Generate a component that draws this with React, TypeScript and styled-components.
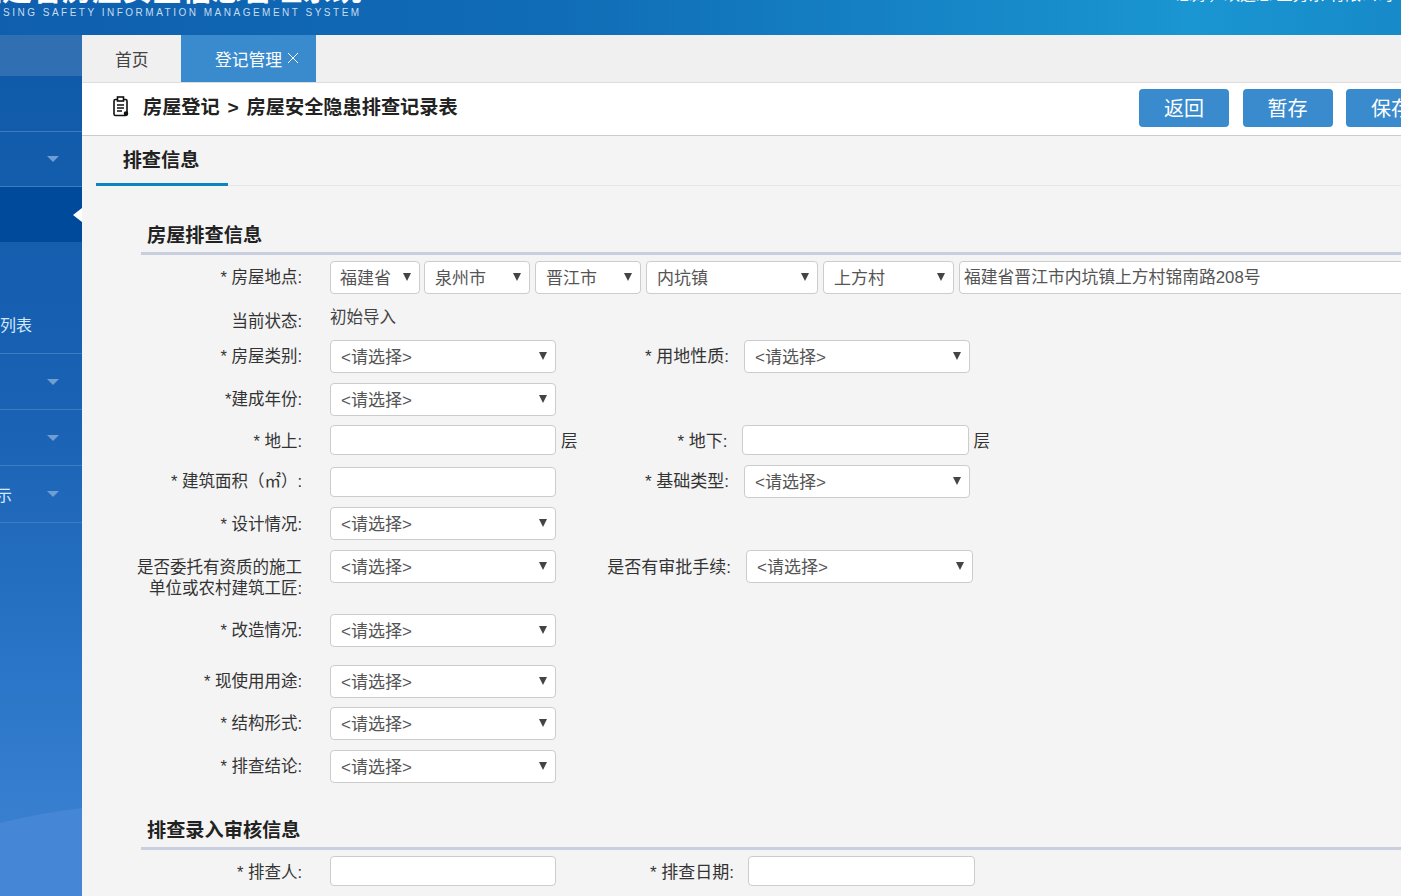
import React from 'react';
import styled, { createGlobalStyle } from 'styled-components';

const GlobalStyle = createGlobalStyle`
	html, body {
		margin: 0;
		padding: 0;
		height: 100%;
		overflow: hidden;
		background: #f4f4f4;
	}
	body {
		font-family: "Liberation Sans", "Noto Sans CJK SC", sans-serif;
		font-size: 16px;
		color: #333;
	}
`;

const Root = styled.div`
	width: 1401px;
	height: 896px;
	overflow: hidden;
	display: flex;
	flex-direction: column;
`;

const Header = styled.header`
	flex: none;
	height: 35px;
	overflow: hidden;
	display: flex;
	justify-content: space-between;
	background: linear-gradient(90deg, #0f5fae 0%, #106cb6 40%, #1a96d2 85%, #178ac9 100%);
`;

const Brand = styled.div`
	display: flex;
	flex-direction: column;
	margin-left: -28px;
	margin-top: -24px;
`;

const BrandTitle = styled.div`
	font-size: 30px;
	line-height: 28px;
	font-weight: 700;
	color: #fff;
	white-space: nowrap;
`;

const BrandSub = styled.div`
	margin-top: 3px;
	font-size: 10px;
	line-height: 12px;
	letter-spacing: 2.5px;
	color: #c6dcf0;
	white-space: nowrap;
	padding-left: 31px;
`;

const Welcome = styled.div`
	margin-top: -14px;
	margin-right: 8px;
	font-size: 16px;
	line-height: 18px;
	color: #fff;
	white-space: nowrap;
`;

const Body = styled.div`
	flex: 1;
	display: flex;
	min-height: 0;
`;

const Sidebar = styled.nav`
	flex: none;
	width: 82px;
	position: relative;
	overflow: hidden;
	display: flex;
	flex-direction: column;
	background: linear-gradient(180deg, #0f5aa8 0%, #1a62b4 45%, #2b76c8 75%, #3f84d4 100%);
`;

const SideTop = styled.div`
	height: 41px;
	background: #2f6fb2;
`;

const SideItem = styled.div<{ $height: number; $active?: boolean }>`
	height: ${p => p.$height}px;
	box-sizing: border-box;
	position: relative;
	display: flex;
	align-items: center;
	justify-content: flex-end;
	padding-right: 23px;
	border-bottom: ${p => (p.$active ? 'none' : '1px solid #3a7dc0')};
	background: ${p => (p.$active ? '#004a9b' : 'transparent')};
`;

const SideText = styled.span<{ $left: number; $top: number }>`
	position: absolute;
	left: ${p => p.$left}px;
	top: ${p => p.$top}px;
	font-size: 16px;
	color: #d3e8fa;
	white-space: nowrap;
`;

const Caret = styled.i`
	width: 0;
	height: 0;
	border-left: 6px solid transparent;
	border-right: 6px solid transparent;
	border-top: 6px solid #6f9ed2;
`;

const ActiveNotch = styled.i`
	position: absolute;
	right: 0;
	top: 50%;
	margin-top: -7px;
	width: 0;
	height: 0;
	border-top: 7px solid transparent;
	border-bottom: 7px solid transparent;
	border-right: 9px solid #fff;
`;

const Wave = styled.svg`
	position: absolute;
	left: 0;
	bottom: 0;
`;

const Main = styled.main`
	flex: 1;
	min-width: 0;
	overflow: hidden;
	display: flex;
	flex-direction: column;
`;

const TabBar = styled.div`
	flex: none;
	box-sizing: border-box;
	height: 48px;
	display: flex;
	background: #f0f0f0;
	border-bottom: 1px solid #ddd;
`;

const Tab = styled.div<{ $active?: boolean }>`
	box-sizing: border-box;
	height: 47px;
	display: flex;
	align-items: center;
	font-size: 16.8px;
	padding-top: 1px;
	padding-left: ${p => (p.$active ? 34 : 33)}px;
	color: ${p => (p.$active ? '#fff' : '#444')};
	background: ${p => (p.$active ? '#3a8bcd' : 'transparent')};
	width: ${p => (p.$active ? 135 : 99)}px;
`;

const TabClose = styled.span`
	margin-left: 5px;
	margin-top: -3px;
	display: flex;
`;

const TitleBar = styled.div`
	flex: none;
	box-sizing: border-box;
	height: 53px;
	background: #fff;
	border-bottom: 1px solid #ccc;
	display: flex;
	align-items: center;
	padding-left: 30px;
	width: 1319px;
`;

const CrumbIcon = styled.span`
	display: flex;
	margin-top: -6px;
`;

const Crumb = styled.div`
	margin-left: 13px;
	font-size: 19.2px;
	font-weight: 700;
	word-spacing: 2.5px;
	color: #222;
	white-space: nowrap;
	margin-top: -6px;
`;

const Actions = styled.div`
	margin-left: auto;
	display: flex;
	gap: 13.5px;
	margin-right: -35px;
	margin-top: -3px;
`;

const ActionButton = styled.button`
	width: 90px;
	height: 38px;
	border: none;
	border-radius: 4px;
	background: #3a8bcd;
	color: #fff;
	font-family: inherit;
	font-size: 20px;
	padding: 0;
	flex: none;
`;

const SubTabs = styled.div`
	flex: none;
	height: 50px;
	box-sizing: border-box;
	margin-left: 14px;
	border-bottom: 1px solid #e6e6e6;
`;

const SubTab = styled.div`
	box-sizing: border-box;
	width: 132px;
	height: 50px;
	border-bottom: 3px solid #0a85c2;
	text-align: center;
	padding-right: 2px;
	font-size: 19.2px;
	line-height: 49px;
	font-weight: 700;
	color: #222;
`;

const Form = styled.div`
	padding-left: 59px;
	padding-top: 36px;
	width: 1300px;
`;

const SectionTitle = styled.div`
	box-sizing: border-box;
	height: 33px;
	border-bottom: 3px solid #c9cfdf;
	padding-left: 6px;
	font-size: 19.2px;
	line-height: 28px;
	font-weight: 700;
	color: #222;
`;

const Row = styled.div<{ $height: number; $pad?: number }>`
	display: flex;
	align-items: flex-start;
	box-sizing: border-box;
	height: ${p => p.$height}px;
	padding-top: ${p => p.$pad ?? 0}px;
`;

const Label = styled.label<{ $width?: number; $top?: number; $left?: number; $wide?: boolean }>`
	flex: none;
	box-sizing: border-box;
	width: ${p => p.$width ?? 161}px;
	margin-left: ${p => p.$left ?? 0}px;
	font-size: ${p => (p.$wide ? 17 : 16.5)}px;
	line-height: 21px;
	color: #333;
	text-align: right;
	padding-top: ${p => p.$top ?? 6}px;
	white-space: nowrap;
`;

const Select = styled.div<{ $width?: number; $left?: number; $pad?: number; $up?: number }>`
	flex: none;
	box-sizing: border-box;
	position: relative;
	width: ${p => p.$width ?? 226}px;
	height: 33px;
	margin-left: ${p => p.$left ?? 28}px;
	margin-top: ${p => -(p.$up ?? 0)}px;
	padding-left: ${p => p.$pad ?? 10}px;
	background: #fff;
	border: 1px solid #ccc;
	border-radius: 4px;
	font-size: 17px;
	line-height: 33px;
	color: #555;
	white-space: nowrap;
`;

const SelectArrow = styled.i`
	position: absolute;
	right: 8px;
	top: 11px;
	width: 0;
	height: 0;
	border-left: 4px solid transparent;
	border-right: 4px solid transparent;
	border-top: 8px solid #444;
`;

const Input = styled.div<{ $width?: number; $left?: number; $height?: number }>`
	flex: none;
	box-sizing: border-box;
	width: ${p => p.$width ?? 226}px;
	height: ${p => p.$height ?? 30}px;
	margin-left: ${p => p.$left ?? 28}px;
	padding-left: 4px;
	background: #fff;
	border: 1px solid #ccc;
	border-radius: 4px;
	font-size: 16.8px;
	line-height: 32px;
	color: #555;
	white-space: nowrap;
`;

const Unit = styled.span`
	margin-left: 5px;
	font-size: 16.5px;
	line-height: 21px;
	padding-top: 6px;
	color: #333;
`;

const StatusText = styled.span`
	margin-left: 28px;
	font-size: 16.5px;
	line-height: 21px;
	padding-top: 3px;
	color: #444;
`;

const ClipboardIcon = () => (
	<svg width='18' height='21' viewBox='0 0 18 21' fill='none' stroke='#111' strokeWidth='1.6'>
		<rect x='2' y='3.5' width='13' height='16' rx='1.5' />
		<rect x='5.5' y='1' width='6' height='4' fill='#fff' />
		<path d='M5 9h7M5 12h7M5 15h5' />
		<circle cx='14' cy='17.5' r='1.5' fill='#111' />
	</svg>
);

const CloseIcon = () => (
	<svg width='12' height='12' viewBox='0 0 12 12' stroke='#fff' strokeWidth='1'>
		<path d='M1 1l10 10M11 1L1 11' />
	</svg>
);

const Dropdown: React.FC<{ value?: string; width?: number; left?: number; pad?: number; up?: number }> = ({
	value = '<请选择>',
	width,
	left,
	pad,
	up,
}) => (
	<Select $width={width} $left={left} $pad={pad} $up={up}>
		{value}
		<SelectArrow />
	</Select>
);

const App: React.FC = () => (
	<Root>
		<GlobalStyle />
		<Header>
			<Brand>
				<BrandTitle>福建省房屋安全信息管理系统</BrandTitle>
				<BrandSub>SING SAFETY INFORMATION MANAGEMENT SYSTEM</BrandSub>
			</Brand>
			<Welcome>您好，欢迎您 王秀东 有限公司</Welcome>
		</Header>
		<Body>
			<Sidebar>
				<SideTop />
				<SideItem $height={56} />
				<SideItem $height={55}>
					<Caret />
				</SideItem>
				<SideItem $height={55} $active>
					<ActiveNotch />
				</SideItem>
				<SideItem $height={112}>
					<SideText $left={0} $top={70}>列表</SideText>
				</SideItem>
				<SideItem $height={56}>
					<Caret />
				</SideItem>
				<SideItem $height={56}>
					<Caret />
				</SideItem>
				<SideItem $height={57}>
					<SideText $left={-4} $top={16}>示</SideText>
					<Caret />
				</SideItem>
				<Wave width='82' height='90' viewBox='0 0 82 90'>
					<path d='M0 17C28 10 55 5 82 2V90H0Z' fill='#4686d6' />
				</Wave>
			</Sidebar>
			<Main>
				<TabBar>
					<Tab>首页</Tab>
					<Tab $active>
						登记管理
						<TabClose>
							<CloseIcon />
						</TabClose>
					</Tab>
				</TabBar>
				<TitleBar>
					<CrumbIcon>
						<ClipboardIcon />
					</CrumbIcon>
					<Crumb>房屋登记 &gt; 房屋安全隐患排查记录表</Crumb>
					<Actions>
						<ActionButton>返回</ActionButton>
						<ActionButton>暂存</ActionButton>
						<ActionButton>保存</ActionButton>
					</Actions>
				</TitleBar>
				<SubTabs>
					<SubTab>排查信息</SubTab>
				</SubTabs>
				<Form>
					<SectionTitle>房屋排查信息</SectionTitle>
					<Row $height={49} $pad={6}>
						<Label>* 房屋地点:</Label>
						<Dropdown value='福建省' width={90} pad={9} />
						<Dropdown value='泉州市' width={106} left={4} />
						<Dropdown value='晋江市' width={106} left={5} />
						<Dropdown value='内坑镇' width={172} left={5} />
						<Dropdown value='上方村' width={131} left={5} />
						<Input $width={460} $left={5} $height={33}>福建省晋江市内坑镇上方村锦南路208号</Input>
					</Row>
					<Row $height={36}>
						<Label $top={7}>当前状态:</Label>
						<StatusText>初始导入</StatusText>
					</Row>
					<Row $height={43}>
						<Label>* 房屋类别:</Label>
						<Dropdown />
						<Label $width={173} $wide>* 用地性质:</Label>
						<Dropdown left={15} />
					</Row>
					<Row $height={42}>
						<Label>*建成年份:</Label>
						<Dropdown />
					</Row>
					<Row $height={42}>
						<Label>* 地上:</Label>
						<Input />
						<Unit>层</Unit>
						<Label $width={150} $wide>* 地下:</Label>
						<Input $left={14} $width={227} />
						<Unit>层</Unit>
					</Row>
					<Row $height={40}>
						<Label $top={4}>* 建筑面积（㎡）:</Label>
						<Input />
						<Label $width={173} $top={4} $wide>* 基础类型:</Label>
						<Dropdown left={15} up={2} />
					</Row>
					<Row $height={43}>
						<Label $top={7}>* 设计情况:</Label>
						<Dropdown />
					</Row>
					<Row $height={64}>
						<Label $top={7} $left={-5} $width={166}>
							是否委托有资质的施工
							<br />
							单位或农村建筑工匠:
						</Label>
						<Dropdown />
						<Label $width={175} $top={7} $wide>是否有审批手续:</Label>
						<Dropdown left={15} width={227} />
					</Row>
					<Row $height={51}>
						<Label>* 改造情况:</Label>
						<Dropdown />
					</Row>
					<Row $height={42}>
						<Label>* 现使用用途:</Label>
						<Dropdown />
					</Row>
					<Row $height={43}>
						<Label>* 结构形式:</Label>
						<Dropdown />
					</Row>
					<Row $height={67}>
						<Label>* 排查结论:</Label>
						<Dropdown />
					</Row>
					<SectionTitle>排查录入审核信息</SectionTitle>
					<Row $height={40} $pad={6}>
						<Label>* 排查人:</Label>
						<Input />
						<Label $width={178} $wide>* 排查日期:</Label>
						<Input $left={14} $width={227} />
					</Row>
				</Form>
			</Main>
		</Body>
	</Root>
);

export default App;
